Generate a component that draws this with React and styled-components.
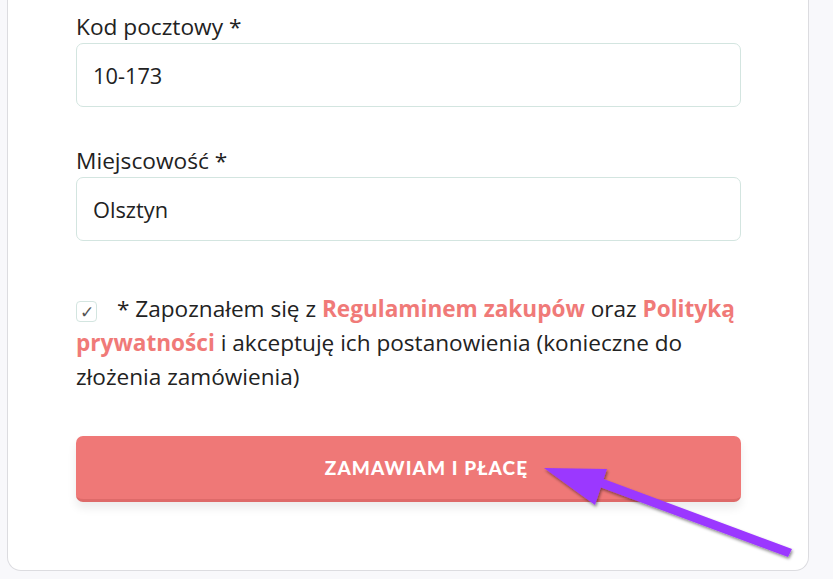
import styled, { createGlobalStyle } from "styled-components";

const Global = createGlobalStyle`
    html, body {
        margin: 0;
        padding: 0;
        background-color: #f8f8fb;
        font-family: "Open Sans", "Liberation Sans", sans-serif;
        color: #222;
        overflow: hidden;
    }
`;

const Page = styled.div`
    position: relative;
    width: 833px;
    height: 579px;
    padding-left: 7px;
    box-sizing: border-box;
`;

const Card = styled.div`
    width: 802px;
    box-sizing: border-box;
    background-color: white;
    border: 1px solid #dcdce0;
    border-top: none;
    border-radius: 0 0 14px 14px;
    padding: 13px 67px 68px 68px;
`;

const Field = styled.div`
    display: flex;
    flex-direction: column;
    gap: 2px;
    margin-bottom: ${(p) => p.$gap}px;
`;

const Label = styled.label`
    font-size: 22.7px;
    line-height: 28px;
    color: #222;
`;

const Input = styled.div`
    height: 62px;
    border: 1px solid #d3e5e0;
    border-radius: 7px;
    padding: 0 16px;
    display: flex;
    align-items: center;
    font-size: 21.8px;
    color: #222;
`;

const Consent = styled.p`
    margin: 0 0 42px;
    font-size: 22.6px;
    line-height: 34px;
    color: #222;
`;

const Box = styled.span`
    display: inline-flex;
    align-items: center;
    justify-content: center;
    width: 19px;
    height: 19px;
    border: 1px solid #d3e5e0;
    border-radius: 4px;
    margin-right: 20px;
    vertical-align: -1px;
    font-size: 17px;
    line-height: 1;
    color: #555;
`;

const Link = styled.a`
    color: #f07a78;
    font-weight: 700;
    text-decoration: none;
`;

const Button = styled.button`
    width: 100%;
    height: 66px;
    border: none;
    border-bottom: 3px solid #de6a69;
    border-radius: 7px;
    background-color: #ef7877;
    color: white;
    font-family: "Lato", "Inter", sans-serif;
    font-weight: 900;
    font-size: 19px;
    letter-spacing: 1.1px;
    box-shadow: 0 6px 10px rgba(0, 0, 0, 0.08);
    padding: 0 0 0 36px;
`;

const Arrow = styled.svg`
    position: absolute;
    left: 0;
    top: 0;
    pointer-events: none;
`;

function App() {
    return (
        <>
            <Global />
            <Page>
                <Card>
                    <Field $gap={40}>
                        <Label>Kod pocztowy *</Label>
                        <Input>10-173</Input>
                    </Field>
                    <Field $gap={51}>
                        <Label>Miejscowość *</Label>
                        <Input>Olsztyn</Input>
                    </Field>
                    <Consent>
                        <Box>✓</Box>* Zapoznałem się z <Link>Regulaminem zakupów</Link> oraz{" "}
                        <Link>Polityką prywatności</Link> i akceptuję ich postanowienia (konieczne do
                        złożenia zamówienia)
                    </Consent>
                    <Button>ZAMAWIAM I PŁACĘ</Button>
                </Card>
                <Arrow width="833" height="579" viewBox="0 0 833 579">
                    <defs>
                        <filter id="sh" x="-20%" y="-20%" width="140%" height="140%">
                            <feDropShadow dx="1" dy="2" stdDeviation="1.5" floodColor="#000" floodOpacity="0.45" />
                        </filter>
                    </defs>
                    <g filter="url(#sh)" fill="#9b38ff">
                        <polygon points="792,549 788,557 597,486 601,478" />
                        <polygon points="544,468 607,469 595,505" />
                    </g>
                </Arrow>
            </Page>
        </>
    );
}

export default App;
